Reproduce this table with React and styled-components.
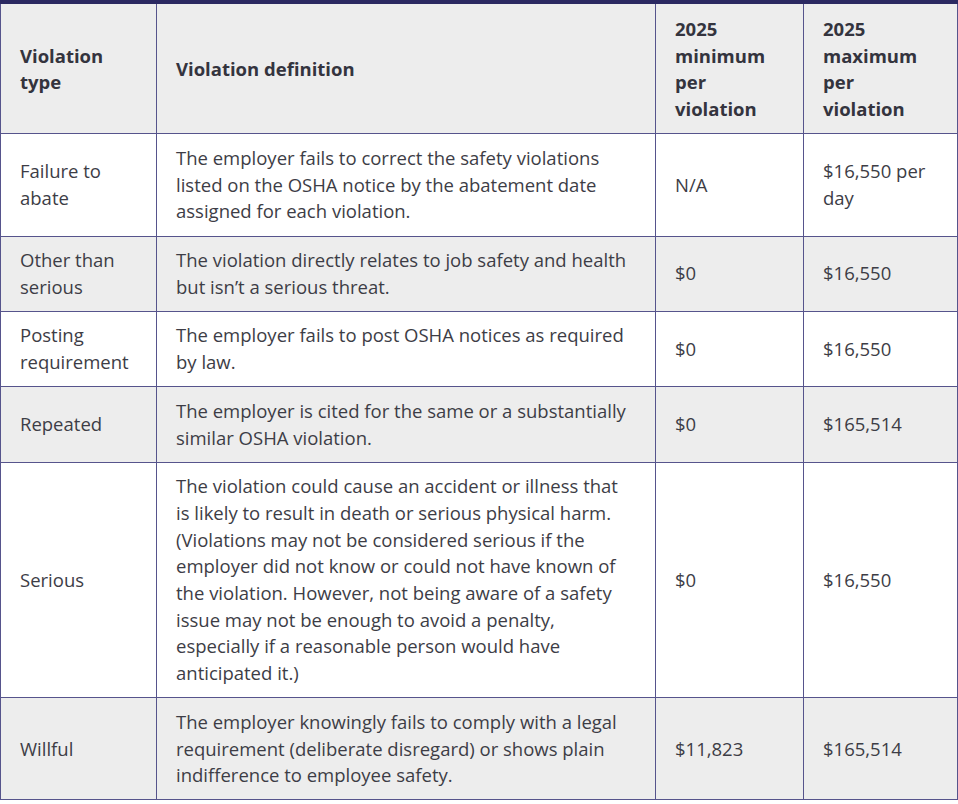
import styled, { createGlobalStyle } from "styled-components";

const GlobalStyle = createGlobalStyle`
  html, body {
    margin: 0;
    padding: 0;
    background: #ffffff;
  }
`;

const Table = styled.table`
  width: 957px;
  border-collapse: collapse;
  table-layout: fixed;
  font-family: "Open Sans", "Noto Sans", sans-serif;
  font-size: 18.5px;
  line-height: 26.7px;
  color: #3d3d46;
  border-top: 4px solid #2b2961;
`;

const Row = styled.tr`
  background: ${(p) => (p.$shaded ? "#ededed" : "#ffffff")};
`;

const Cell = styled.td`
  border: 1px solid #56548c;
  padding: 10.5px 19px;
  vertical-align: middle;
  text-align: left;
`;

const HeadCell = styled(Cell).attrs({ as: "th" })`
  font-weight: 700;
  color: #34343e;
  padding: 12px 19px 10.6px;
`;

const rows = [
  {
    type: "Failure to abate",
    def: "The employer fails to correct the safety violations listed on the OSHA notice by the abatement date assigned for each violation.",
    min: "N/A",
    max: "$16,550 per day",
  },
  {
    type: "Other than serious",
    def: "The violation directly relates to job safety and health but isn’t a serious threat.",
    min: "$0",
    max: "$16,550",
  },
  {
    type: "Posting requirement",
    def: "The employer fails to post OSHA notices as required by law.",
    min: "$0",
    max: "$16,550",
  },
  {
    type: "Repeated",
    def: "The employer is cited for the same or a substantially similar OSHA violation.",
    min: "$0",
    max: "$165,514",
  },
  {
    type: "Serious",
    def: "The violation could cause an accident or illness that is likely to result in death or serious physical harm. (Violations may not be considered serious if the employer did not know or could not have known of the violation. However, not being aware of a safety issue may not be enough to avoid a penalty, especially if a reasonable person would have anticipated it.)",
    min: "$0",
    max: "$16,550",
  },
  {
    type: "Willful",
    def: "The employer knowingly fails to comply with a legal requirement (deliberate disregard) or shows plain indifference to employee safety.",
    min: "$11,823",
    max: "$165,514",
  },
];

export default function App() {
  return (
    <>
      <GlobalStyle />
      <Table>
        <colgroup>
          <col style={{ width: 156 }} />
          <col style={{ width: 499 }} />
          <col style={{ width: 148 }} />
          <col style={{ width: 154 }} />
        </colgroup>
        <thead>
          <Row $shaded>
            <HeadCell>Violation type</HeadCell>
            <HeadCell>Violation definition</HeadCell>
            <HeadCell>2025 minimum per violation</HeadCell>
            <HeadCell>2025 maximum per violation</HeadCell>
          </Row>
        </thead>
        <tbody>
          {rows.map((r, i) => (
            <Row key={r.type} $shaded={i % 2 === 1}>
              <Cell>{r.type}</Cell>
              <Cell>{r.def}</Cell>
              <Cell>{r.min}</Cell>
              <Cell>{r.max}</Cell>
            </Row>
          ))}
        </tbody>
      </Table>
    </>
  );
}
